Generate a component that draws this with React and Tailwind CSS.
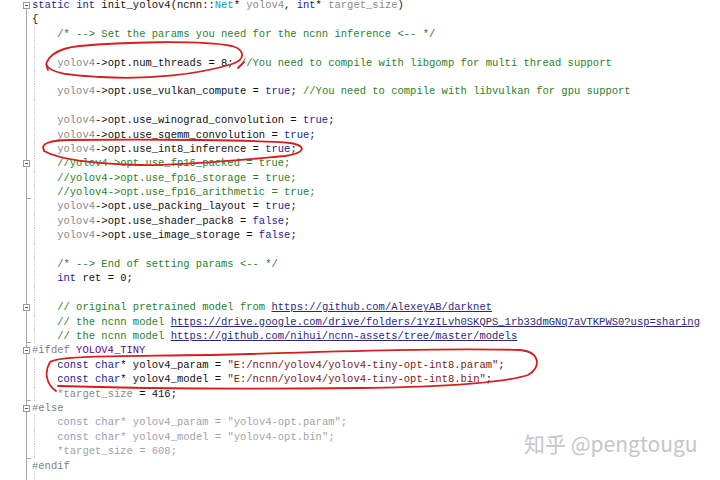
import React from 'react';

const tone = {
  k: 'text-[#1c1c9c]',
  t: 'text-[#2b91af]',
  p: 'text-[#8a8a8a]',
  n: 'text-[#111111]',
  c: 'text-[#2a7f2a]',
  u: 'text-[#2a2a7a] underline',
  m: 'text-[#6f008a]',
  d: 'text-[#808080]',
  s: 'text-[#7a2020]',
  i: 'text-[#a3a3a3]',
  ik: 'text-[#9a9ac4]',
};

const IND = '    ';

// each row: tokens, fold marker, end tick, indent guide
const rows = [
  { fold: true, tokens: [['k', 'static'], ['n', ' '], ['k', 'int'], ['n', ' init_yolov4(ncnn::'], ['t', 'Net'], ['n', '* '], ['p', 'yolov4'], ['n', ', '], ['k', 'int'], ['n', '* '], ['p', 'target_size'], ['n', ')']] },
  { tokens: [['n', '{']] },
  { guide: true, tokens: [['n', IND], ['c', '/* --> Set the params you need for the ncnn inference <-- */']] },
  { guide: true, tokens: [] },
  { guide: true, tokens: [['n', IND], ['p', 'yolov4'], ['n', '->opt.num_threads = 8; '], ['c', '//You need to compile with libgomp for multi thread support']] },
  { guide: true, tokens: [] },
  { guide: true, tokens: [['n', IND], ['p', 'yolov4'], ['n', '->opt.use_vulkan_compute = '], ['k', 'true'], ['n', '; '], ['c', '//You need to compile with libvulkan for gpu support']] },
  { guide: true, tokens: [] },
  { guide: true, tokens: [['n', IND], ['p', 'yolov4'], ['n', '->opt.use_winograd_convolution = '], ['k', 'true'], ['n', ';']] },
  { guide: true, tokens: [['n', IND], ['p', 'yolov4'], ['n', '->opt.use_sgemm_convolution = '], ['k', 'true'], ['n', ';']] },
  { guide: true, tokens: [['n', IND], ['p', 'yolov4'], ['n', '->opt.use_int8_inference = '], ['k', 'true'], ['n', ';']] },
  { guide: true, fold: true, tokens: [['n', IND], ['c', '//yolov4->opt.use_fp16_packed = true;']] },
  { guide: true, tokens: [['n', IND], ['c', '//yolov4->opt.use_fp16_storage = true;']] },
  { guide: true, tick: true, tokens: [['n', IND], ['c', '//yolov4->opt.use_fp16_arithmetic = true;']] },
  { guide: true, tokens: [['n', IND], ['p', 'yolov4'], ['n', '->opt.use_packing_layout = '], ['k', 'true'], ['n', ';']] },
  { guide: true, tokens: [['n', IND], ['p', 'yolov4'], ['n', '->opt.use_shader_pack8 = '], ['k', 'false'], ['n', ';']] },
  { guide: true, tokens: [['n', IND], ['p', 'yolov4'], ['n', '->opt.use_image_storage = '], ['k', 'false'], ['n', ';']] },
  { guide: true, tokens: [] },
  { guide: true, tokens: [['n', IND], ['c', '/* --> End of setting params <-- */']] },
  { guide: true, tokens: [['n', IND], ['k', 'int'], ['n', ' ret = 0;']] },
  { guide: true, tokens: [] },
  { guide: true, fold: true, tokens: [['n', IND], ['c', '// original pretrained model from '], ['u', 'https://github.com/AlexeyAB/darknet']] },
  { guide: true, tokens: [['n', IND], ['c', '// the ncnn model '], ['u', 'https://drive.google.com/drive/folders/1YzILvh0SKQPS_1rb33dmGNq7aVTKPWS0?usp=sharing']] },
  { guide: true, tick: true, tokens: [['n', IND], ['c', '// the ncnn model '], ['u', 'https://github.com/nihui/ncnn-assets/tree/master/models']] },
  { fold: true, tokens: [['d', '#ifdef '], ['m', 'YOLOV4_TINY']] },
  { guide: true, tokens: [['n', IND], ['k', 'const'], ['n', ' '], ['k', 'char'], ['n', '* yolov4_param = '], ['s', '"E:/ncnn/yolov4/yolov4-tiny-opt-int8.param"'], ['n', ';']] },
  { guide: true, tokens: [['n', IND], ['k', 'const'], ['n', ' '], ['k', 'char'], ['n', '* yolov4_model = '], ['s', '"E:/ncnn/yolov4/yolov4-tiny-opt-int8.bin"'], ['n', ';']] },
  { guide: true, tick: true, tokens: [['n', IND], ['p', '*target_size'], ['n', ' = 416;']] },
  { fold: true, tokens: [['d', '#else']] },
  { guide: true, tokens: [['n', IND], ['ik', 'const'], ['i', ' '], ['ik', 'char'], ['i', '* yolov4_param = "yolov4-opt.param";']] },
  { guide: true, tokens: [['n', IND], ['ik', 'const'], ['i', ' '], ['ik', 'char'], ['i', '* yolov4_model = "yolov4-opt.bin";']] },
  { guide: true, tick: true, tokens: [['n', IND], ['i', '*target_size = 608;']] },
  { tokens: [['d', '#endif']] },
  { guide: true, tokens: [] },
];

const Gutter = ({ row, first }) => (
  <div className="w-[32px] shrink-0 flex">
    <div className={`relative w-[27px] border-r border-[#a8a8a8] ${first ? 'mt-[10px]' : ''}`}>
      {row.fold && (
        <span className={`absolute right-[-4px] w-[7px] h-[7px] border border-[#9a9a9a] bg-white flex items-center justify-center ${first ? 'top-[-6px]' : 'top-[4px]'}`}>
          <span className="block w-[3px] h-px bg-[#555]" />
        </span>
      )}
    </div>
    {row.tick && <div className="self-end w-[4px] h-px bg-[#a8a8a8]" />}
  </div>
);

const Marks = () => (
  <svg className="absolute inset-0 pointer-events-none" width="720" height="480" viewBox="0 0 720 480" fill="none">
    <g stroke="#d21f1f" strokeWidth="1.8" strokeLinecap="round" strokeLinejoin="round">
      <path d="M48 70 C42 60 55 48 80 46 C120 42 200 40 232 46 C246 50 245 60 232 64 C200 74 150 80 100 77 C70 75 50 74 46 64" />
      <path d="M238 68 L244 62" />
      <path d="M44 150 C40 144 50 140 70 140 C150 139 260 140 290 143 C308 146 305 153 285 156 C240 160 180 166 140 165 C100 164 60 160 44 151" />
      <path d="M56 391 C46 384 44 372 50 362 C60 354 150 357 250 354 C350 351 450 348 520 350 C541 352 541 368 528 375 C500 384 440 387 360 388 C250 389 120 388 58 386" />
    </g>
  </svg>
);

export default function App() {
  return (
    <div className="relative w-[720px] h-[480px] overflow-hidden bg-white">
      <div className="-mt-[2px] font-['Liberation_Mono',monospace] text-[10.5px] leading-[14.4px]">
        {rows.map((row, idx) => (
          <div key={idx} className="flex h-[14.4px]">
            <Gutter row={row} first={idx === 0} />
            <div className="relative whitespace-pre">
              {row.guide && <span className="absolute left-[2px] top-0 bottom-0 border-l border-dotted border-[#c8c8c8]" />}
              {row.tokens.map(([kind, text], j) => (
                <span key={j} className={tone[kind]}>{text}</span>
              ))}
            </div>
          </div>
        ))}
      </div>
      <Marks />
      <div className="absolute left-[524px] top-[430px] font-['Noto_Sans_CJK_SC',sans-serif] text-[21px] leading-[26px] text-[#c6c6c6] whitespace-nowrap">
        知乎 @pengtougu
      </div>
    </div>
  );
}
